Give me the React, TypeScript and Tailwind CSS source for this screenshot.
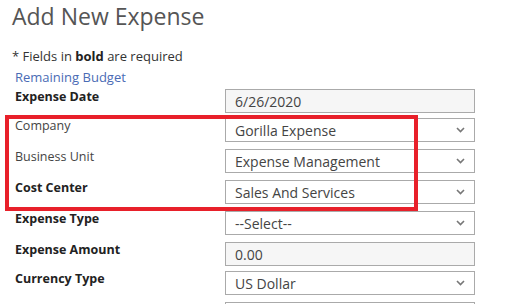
import React from "react";

const font = { fontFamily: '"Open Sans", "DejaVu Sans", sans-serif' };

const Chevron = () => (
  <svg width="9" height="6" viewBox="0 0 9 6" className="text-[#777]">
    <path d="M1 1l3.5 3.5L8 1" fill="none" stroke="currentColor" strokeWidth="1.6" />
  </svg>
);

type Row = {
  label: string;
  value: string;
  bold?: boolean;
  select?: boolean;
  gray?: boolean;
  mb: string;
};

const rows: Row[] = [
  { label: "Expense Date", value: "6/26/2020", bold: true, gray: true, mb: "mb-[5px]" },
  { label: "Company", value: "Gorilla Expense", select: true, mb: "mb-[7px]" },
  { label: "Business Unit", value: "Expense Management", select: true, mb: "mb-[7px]" },
  { label: "Cost Center", value: "Sales And Services", bold: true, select: true, mb: "mb-[7px]" },
  { label: "Expense Type", value: "--Select--", bold: true, select: true, mb: "mb-[7px]" },
  { label: "Expense Amount", value: "0.00", bold: true, gray: true, mb: "mb-[5px]" },
  { label: "Currency Type", value: "US Dollar", bold: true, select: true, mb: "mb-[7px]" },
  { label: "", value: "", select: true, mb: "mb-0" },
];

export default function App() {
  return (
    <div className="relative w-[526px] h-[304px] overflow-hidden bg-white pl-3" style={font}>
      <h1 className="text-[23px] leading-[30px] text-[#555] pt-[1px]">Add New Expense</h1>
      <p className="mt-[16px] text-[13px] leading-[18px] text-[#333]">
        * Fields in <b className="text-[#222]">bold</b> are required
      </p>
      <p className="mt-[3px] ml-[3px] text-[13px] leading-[18px] text-[#4a6bb5]">Remaining Budget</p>
      <div className="mt-[3px] flex flex-col">
        {rows.map((r, i) => (
          <div key={i} className={`flex items-start ${r.mb}`}>
            <div
              className={`w-[213px] pl-[3px] text-[12.5px] leading-[16px] ${
                r.bold ? "font-bold text-[#222]" : "text-[#444]"
              }`}
            >
              {r.label}
            </div>
            <div
              className={`flex h-[24px] w-[250px] items-center justify-between border border-[#aaa] pl-[9px] pr-[9px] text-[14px] text-[#444] ${
                r.gray ? "bg-[#f6f6f6]" : "bg-white"
              }`}
            >
              <span>{r.value}</span>
              {r.select && <Chevron />}
            </div>
          </div>
        ))}
      </div>
      <div className="pointer-events-none absolute left-[5px] top-[115px] h-[96px] w-[413px] border-[4.5px] border-[#e8202a]" />
    </div>
  );
}
